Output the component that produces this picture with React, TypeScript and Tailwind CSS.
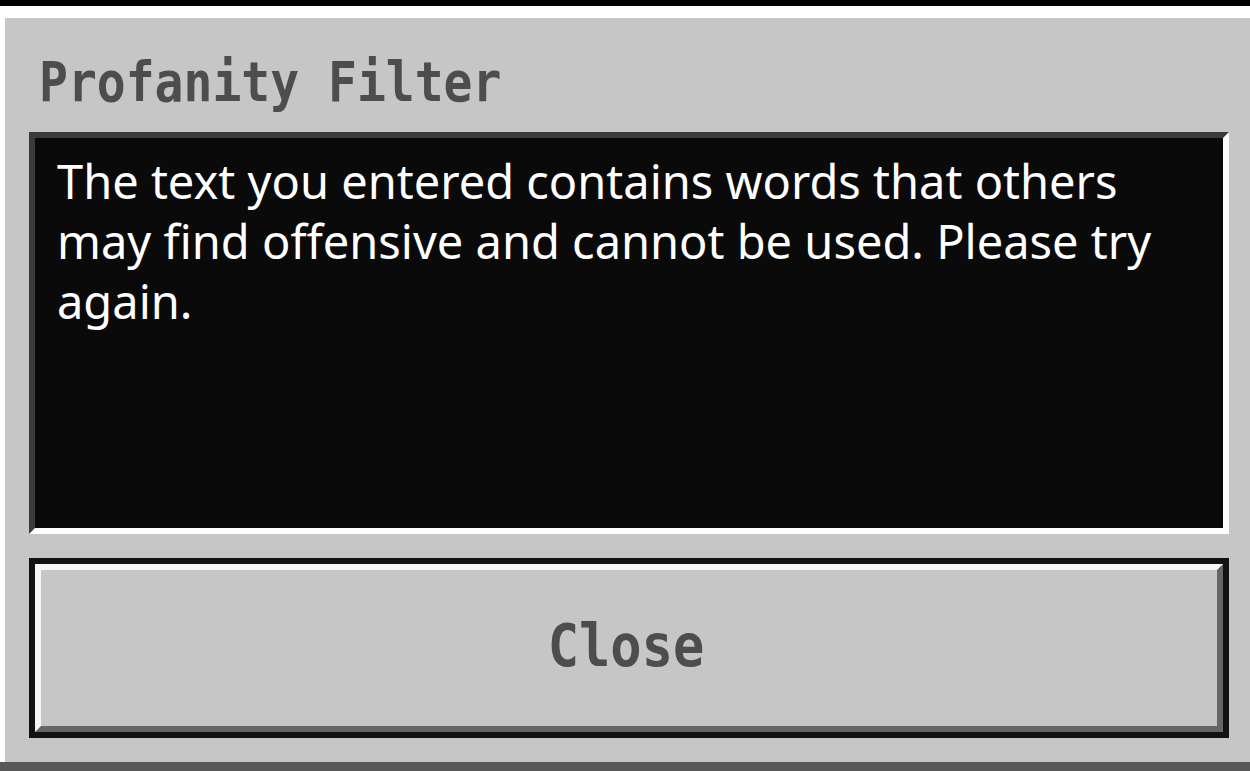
const pixelFont = { fontFamily: '"DejaVu Sans Mono", monospace' };

const CloseButton = () => {
  return (
    <button
      type="button"
      className="h-[180px] w-full border-[6px] border-[#121212] bg-[#121212]"
    >
      <div className="flex h-full w-full items-center justify-center border-[6px] border-t-[#f6f6f6] border-l-[#f6f6f6] border-r-[#666666] border-b-[#666666] bg-[#c6c6c6]">
        <span
          className="inline-block scale-y-[1.12] pb-[4px] pr-[6px] text-[52px] leading-[52px] font-bold text-[#4d4d4d]"
          style={pixelFont}
        >
          Close
        </span>
      </div>
    </button>
  );
};

export default function App() {
  return (
    <div className="h-[771px] w-[1250px] overflow-hidden bg-black pt-[6px]">
      <div className="h-full border-b-[9px] border-[#585858]">
        <div className="flex h-full flex-col border-t-[12px] border-l-[5px] border-white bg-[#c6c6c6] pl-[24px] pr-[21px] pb-[24px]">
          {/* 제목 */}
          <div className="h-[114px] pl-[10px] pt-[40px]">
            <h1
              className="inline-block scale-y-[1.13] text-[48px] leading-[48px] font-bold text-[#4d4d4d]"
              style={pixelFont}
            >
              Profanity Filter
            </h1>
          </div>

          {/* 메시지 */}
          <div className="h-[402px] border-[6px] border-t-[#3b3b3b] border-l-[#3b3b3b] border-r-white border-b-white bg-[#0a0a0a] px-[22px] pt-[13px]">
            <p
              className="text-[47px] leading-[60px] text-white"
              style={{ fontFamily: '"Noto Sans", sans-serif' }}
            >
              The text you entered contains words that others may find
              offensive and cannot be used. Please try again.
            </p>
          </div>

          <div className="mt-[24px]">
            <CloseButton />
          </div>
        </div>
      </div>
    </div>
  );
}
